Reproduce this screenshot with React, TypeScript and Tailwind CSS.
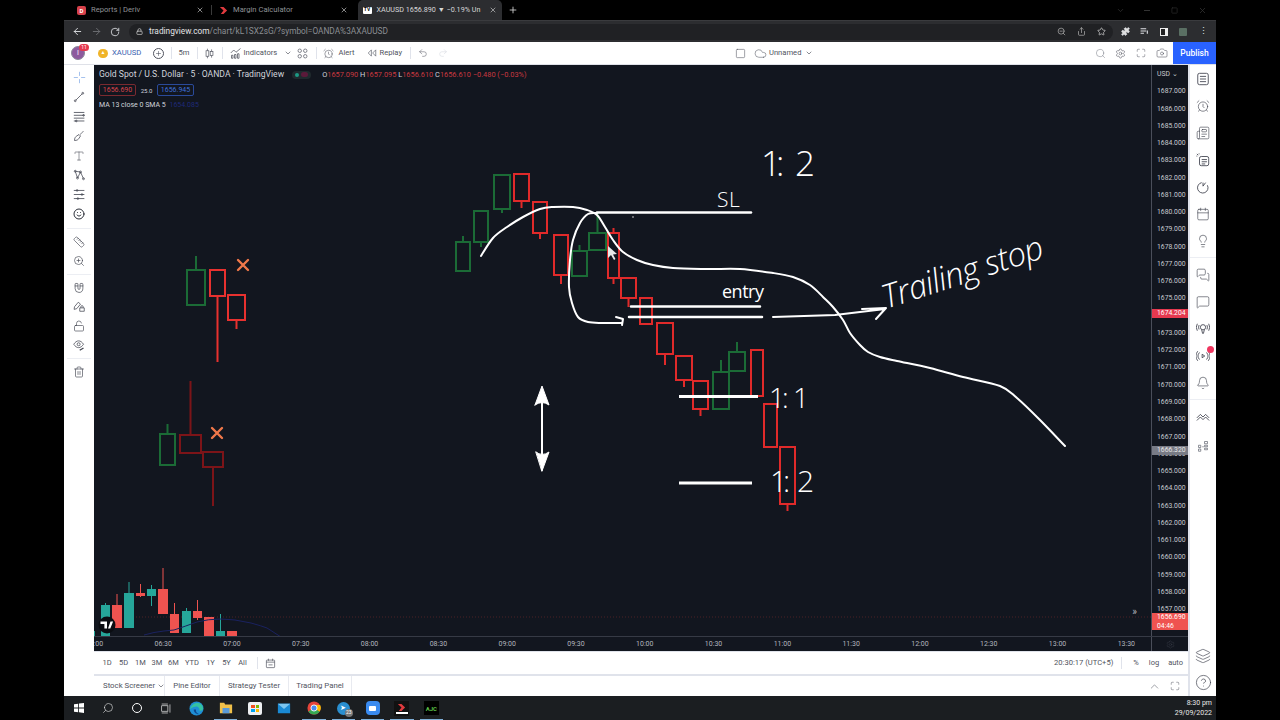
import {
  AlarmClock, ArrowLeft, ArrowRight, Bell, Calendar, Camera, ChevronDown, ChevronUp, CircleHelp, Cloud, Layers, Lightbulb,
  Lock, LockOpen, Magnet, Maximize, MessageSquare, MessagesSquare, Newspaper, Plus, Puzzle, Redo2, RotateCw, Ruler,
  Search, Settings, Share, Smile, Square, Star, Trash2, Type, Undo2, X, ZoomIn, ZoomOut,
} from 'lucide-react';
import type { ReactNode } from 'react';

const GREEN = '#1b6b36';
const RED = '#e02a2a';
const DARKRED = '#7c1418';

type CandleProps = { x0: number; x1: number; y0: number; y1: number; top?: number; bottom?: number; color: string; sw?: number };

// hollow hand-marked candle, coords are page pixels
function Candle({ x0, x1, y0, y1, top, bottom, color, sw = 2 }: CandleProps) {
  const mid = (x0 + x1) / 2;
  return (
    <g stroke={color} strokeWidth={sw} fill="none">
      <rect x={x0} y={y0} width={x1 - x0} height={y1 - y0} />
      {top !== undefined && <line x1={mid} x2={mid} y1={top} y2={y0} />}
      {bottom !== undefined && <line x1={mid} x2={mid} y1={y1} y2={bottom} />}
    </g>
  );
}

const marked: CandleProps[] = [
  { x0: 456, x1: 470, y0: 242, y1: 271, top: 236, color: GREEN },
  { x0: 474, x1: 488, y0: 211, y1: 242, bottom: 247, color: GREEN },
  { x0: 494, x1: 510, y0: 175, y1: 209, bottom: 213, color: GREEN },
  { x0: 514, x1: 529, y0: 174, y1: 201, bottom: 208, color: RED },
  { x0: 533, x1: 547, y0: 202, y1: 233, bottom: 239, color: RED },
  { x0: 554, x1: 568, y0: 235, y1: 275, bottom: 284, color: RED },
  { x0: 572, x1: 587, y0: 251, y1: 276, top: 245, color: GREEN },
  { x0: 589, x1: 606, y0: 233, y1: 250, top: 213, color: GREEN, sw: 2 },
  { x0: 608, x1: 619, y0: 233, y1: 278, top: 228, bottom: 284, color: RED },
  { x0: 621, x1: 636, y0: 278, y1: 298, bottom: 307, color: RED },
  { x0: 640, x1: 652, y0: 298, y1: 324, color: RED },
  { x0: 657, x1: 673, y0: 323, y1: 354, bottom: 365, color: RED },
  { x0: 676, x1: 692, y0: 356, y1: 380, bottom: 387, color: RED },
  { x0: 693, x1: 708, y0: 381, y1: 409, bottom: 416, color: RED },
  { x0: 713, x1: 729, y0: 372, y1: 409, top: 360, color: GREEN },
  { x0: 729, x1: 745, y0: 352, y1: 371, top: 342, color: GREEN },
  { x0: 751, x1: 763, y0: 350, y1: 396, color: RED },
  { x0: 764, x1: 777, y0: 404, y1: 447, color: RED },
  { x0: 780, x1: 795, y0: 447, y1: 504, bottom: 511, color: RED },
  { x0: 187, x1: 205, y0: 270, y1: 305, top: 256, color: GREEN },
  { x0: 210, x1: 225, y0: 270, y1: 296, bottom: 362, color: '#e8312f' },
  { x0: 228, x1: 245, y0: 295, y1: 320, bottom: 329, color: '#e8312f' },
  { x0: 160, x1: 175, y0: 434, y1: 465, top: 424, color: GREEN },
  { x0: 180, x1: 201, y0: 435, y1: 453, top: 381, color: DARKRED },
  { x0: 203, x1: 223, y0: 452, y1: 467, bottom: 506, color: DARKRED },
];

// x0, x1, body top, body bottom, wick top, wick bottom
const live: [number, number, number, number, number, number, string][] = [
  [92, 95, 631, 637, 631, 637, '#26a69a'],
  [101, 110, 605, 637, 603, 637, '#26a69a'],
  [112, 122, 605, 628, 594, 628, '#ef5350'],
  [124, 134, 593, 628, 582, 628, '#26a69a'],
  [136, 145, 593, 596, 584, 597, '#ef5350'],
  [147, 156, 589, 596, 585, 606, '#26a69a'],
  [158, 168, 589, 614, 568, 614, '#ef5350'],
  [170, 179, 614, 633, 603, 633, '#ef5350'],
  [182, 191, 611, 633, 608, 633, '#26a69a'],
  [193, 202, 611, 618, 600, 620, '#ef5350'],
  [204, 214, 617, 637, 617, 637, '#ef5350'],
  [216, 225, 631, 637, 614, 637, '#26a69a'],
  [227, 237, 631, 637, 631, 637, '#ef5350'],
];

type Pt = [number, number];

// catmull-rom through the points, so the pen strokes stay round
function smooth(pts: Pt[]) {
  let d = `M${pts[0][0]} ${pts[0][1]}`;
  for (let i = 0; i < pts.length - 1; i++) {
    const p0 = pts[Math.max(i - 1, 0)];
    const p1 = pts[i];
    const p2 = pts[i + 1];
    const p3 = pts[Math.min(i + 2, pts.length - 1)];
    const c1x = p1[0] + (p2[0] - p0[0]) / 6;
    const c1y = p1[1] + (p2[1] - p0[1]) / 6;
    const c2x = p2[0] - (p3[0] - p1[0]) / 6;
    const c2y = p2[1] - (p3[1] - p1[1]) / 6;
    d += ` C${c1x.toFixed(1)} ${c1y.toFixed(1)} ${c2x.toFixed(1)} ${c2y.toFixed(1)} ${p2[0]} ${p2[1]}`;
  }
  return d;
}

const trailCurve: Pt[] = [
  [481, 256], [493, 238], [507, 227], [523, 217], [540, 209], [553, 207], [573, 207], [587, 210], [597, 215], [605, 227], [613, 240],
  [623, 252], [637, 260], [653, 265], [673, 268], [707, 269], [740, 269], [773, 273], [793, 277], [810, 285], [823, 297], [833, 307],
  [843, 320], [850, 333], [860, 345], [868, 352], [880, 357], [897, 361], [930, 368], [963, 377], [1000, 386], [1017, 398], [1040, 420], [1065, 446],
];

const hookCurve: Pt[] = [
  [597, 213], [588, 214], [580, 223], [573, 240], [570, 260], [569, 287], [572, 303], [578, 317], [588, 322], [603, 323], [622, 323],
];

function ChartDrawing() {
  return (
    <svg viewBox="94 65 1057 571" className="block h-[571px] w-[1057px]">
      <line x1="136" x2="1151" y1="617" y2="617" stroke="#4a2026" strokeWidth="1" strokeDasharray="1 2" />
      {live.map(([a, b, t, u, wt, wb, col]) => (
        <g key={a}>
          <line x1={(a + b) / 2} x2={(a + b) / 2} y1={wt} y2={wb} stroke={col} strokeWidth="1" />
          <rect x={a} y={t} width={b - a} height={u - t} fill={col} />
        </g>
      ))}
      <path d="M144 635 Q154 632 164 631 L174 630 Q186 626 197 622 Q208 619 221 619 Q234 619 251 623 Q262 626 267 628 L281 637" fill="none" stroke="#1a2260" strokeWidth="1" />
      <circle cx="107" cy="625" r="8.5" fill="#0b0d12" />
      <path d="M102 621.5h6.500v7h-2.600v-4.500h-3.900z M109.500 628.500l2.500-7h2.600l-2.800 7z" fill="#fff" transform="translate(-1.500 0)" />

      {marked.map((c, i) => (
        <Candle key={i} {...c} />
      ))}

      <g stroke="#f0784a" strokeWidth="2.400" strokeLinecap="round">
        <path d="M238 260l10 10M248 260l-10 10" />
        <path d="M212 428l10 10M222 428l-10 10" />
      </g>

      <g fill="none" stroke="#fff" strokeLinecap="round" strokeLinejoin="round">
        <path strokeWidth="2" d={smooth(trailCurve)} />
        <path strokeWidth="2" d={smooth(hookCurve)} />
        <path strokeWidth="2" d="M616 317 L623 319 L622 325" />
        <path strokeWidth="2.500" d="M597 212.500H751" />
        <path strokeWidth="2.500" d="M631 306.500H760M629 317H762" />
        <path strokeWidth="2" d="M773 317 L835 315 L885 309 M862 309 L886 308 L876 319" />
        <path strokeWidth="3" d="M679 396.500H758M679 483H752" strokeLinecap="butt" />
        <path strokeWidth="2" d="M542 390V470" />
        <path d="M535 405L542 386L549 405Q542 400 535 405Z M536 452Q542 457 549 452L542 471Z" fill="#fff" strokeWidth="1" />
      </g>
      <circle cx="633" cy="217" r="0.800" fill="#ddd" />
      <path d="M608 246 V258 L611 255 L614 260 L615.500 259 L613 254.500 L617 254 Z" fill="#e8e8e8" />

      <g fill="#fff" fontFamily="'Open Sans', sans-serif" fontWeight="300">
        <text x="761 776 795" y="176" fontSize="35">1:2</text>
        <text x="717 729" y="207" fontSize="21">SL</text>
        <text x="722" y="298" fontSize="18" fontWeight="400" textLength="42">entry</text>
        <text x="769 782 793" y="408" fontSize="28">1:1</text>
        <text x="770 783 797" y="492" fontSize="30">1:2</text>
        <text x="0" y="0" fontSize="33" fontStyle="italic" textLength="168" transform="translate(886 309) rotate(-18)">Trailing stop</text>
      </g>
    </svg>
  );
}

function Ico({ children, className = 'h-3 w-3' }: { children: ReactNode; className?: string }) {
  return (
    <svg viewBox="0 0 16 16" fill="none" stroke="currentColor" strokeWidth="1" className={className}>
      {children}
    </svg>
  );
}

const icT = 'h-[12px] w-[12px] text-[#434651]';
const sw = 1.3;

function ToolCell({ children }: { children: ReactNode }) {
  return <div className="flex h-[19.5px] items-center justify-center">{children}</div>;
}

function ToolSep({ h }: { h: string }) {
  return (
    <div className={`flex items-center px-[3px] ${h}`}>
      <div className="h-px w-full bg-[#eceef3]" />
    </div>
  );
}

function LeftToolbar() {
  return (
    <div className="flex w-[30px] flex-col bg-white pt-[3px]">
      <ToolCell>
        <Ico className="h-[13px] w-[13px] text-[#90b4ea]">
          <path d="M8 1v5M8 10v5M1 8h5M10 8h5" />
        </Ico>
      </ToolCell>
      <ToolCell>
        <Ico className={icT}>
          <path d="M3.500 12.500l9-9" />
          <circle cx="3" cy="13" r="1.200" />
          <circle cx="13" cy="3" r="1.200" />
        </Ico>
      </ToolCell>
      <ToolCell>
        <Ico className="h-[13px] w-[13px] text-[#434651]">
          <path d="M1 3h13M1 6.500h13M1 10h13M1 13.500h13" />
          <circle cx="13" cy="6.500" r="1" />
          <circle cx="4" cy="13.500" r="1" />
        </Ico>
      </ToolCell>
      <ToolCell>
        <Ico className={icT}>
          <path d="M2 14c0-3 1-5 3-6l3-2 2 2-2 3c-1 2-3 3-6 3zM10 6c1-2 2-3 4-4" />
        </Ico>
      </ToolCell>
      <ToolCell>
        <Type className={icT} strokeWidth={1.100} />
      </ToolCell>
      <ToolCell>
        <Ico className={icT}>
          <path d="M3 3l3 9 4-8 4 9M3 3l7 1" />
          <circle cx="3" cy="3" r="1.300" />
          <circle cx="6" cy="12" r="1.300" />
          <circle cx="10" cy="4" r="1.300" />
          <circle cx="14" cy="13" r="1.300" />
        </Ico>
      </ToolCell>
      <ToolCell>
        <Ico className="h-[13px] w-[13px] text-[#434651]">
          <path d="M1 3h13M1 8h13M1 13h13" />
          <circle cx="5" cy="3" r="1" />
          <circle cx="11" cy="8" r="1" />
          <circle cx="6" cy="13" r="1" />
        </Ico>
      </ToolCell>
      <ToolCell>
        <Smile className="h-[12px] w-[12px] text-[#131722]" strokeWidth={1.800} />
      </ToolCell>
      <ToolSep h="h-[8px]" />
      <ToolCell>
        <Ruler className={icT} strokeWidth={sw} />
      </ToolCell>
      <ToolCell>
        <ZoomIn className={icT} strokeWidth={sw} />
      </ToolCell>
      <ToolSep h="h-[6px]" />
      <ToolCell>
        <Magnet className={icT + ' rotate-[135deg]'} strokeWidth={sw} />
      </ToolCell>
      <ToolCell>
        <Ico className={icT}>
          <path d="M2 9l5-6 3 2.500-5 6-3.500 1zM9 10.500h6v4.500H9zM10.500 10.500V9a1.500 1.500 0 0 1 3 0v1.500" />
        </Ico>
      </ToolCell>
      <ToolCell>
        <LockOpen className={icT} strokeWidth={sw} />
      </ToolCell>
      <ToolCell>
        <Ico className={icT}>
          <path d="M1 7c2-3 4-4.500 6.500-4.500S12 4 14 7c-2 3-4 4.500-6.500 4.500S3 10 1 7z" />
          <circle cx="7.500" cy="7" r="2" />
          <path d="M9 15l5-3" strokeWidth="1.800" />
        </Ico>
      </ToolCell>
      <ToolSep h="h-[7px]" />
      <ToolCell>
        <Trash2 className={icT} strokeWidth={sw} />
      </ToolCell>
    </div>
  );
}

function SideCell({ children }: { children: ReactNode }) {
  return <div className="relative flex h-[27px] items-center justify-center">{children}</div>;
}

const icS = 'h-[14px] w-[14px] text-[#434651]';

function RightSidebar() {
  return (
    <div className="ml-[2px] flex w-[26px] flex-col bg-white">
      <SideCell>
        <Ico className={icS}>
          <rect x="2" y="1.500" width="12" height="13" rx="2" />
          <path d="M4.500 5h7M4.500 8h7M4.500 11h7" />
        </Ico>
      </SideCell>
      <SideCell>
        <AlarmClock className={icS} strokeWidth={1.100} />
      </SideCell>
      <SideCell>
        <Newspaper className={icS} strokeWidth={1.100} />
      </SideCell>
      <SideCell>
        <Ico className={icS}>
          <rect x="4" y="4" width="10.500" height="10.500" rx="2" />
          <path d="M6.500 7.500h6M6.500 10h6M6.500 12.500h4M1 1l1.500 1.500M3.500.5v1M.5 3.500h1" />
        </Ico>
      </SideCell>
      <SideCell>
        <Ico className={icS}>
          <path d="M6.500 3a6 6 0 1 0 6.500 3M8 3v4l3-4" />
        </Ico>
      </SideCell>
      <SideCell>
        <Calendar className={icS} strokeWidth={1.100} />
      </SideCell>
      <SideCell>
        <Lightbulb className={icS} strokeWidth={1.100} />
      </SideCell>
      <div className="flex h-[7px] items-center">
        <div className="h-px w-full bg-[#eceef3]" />
      </div>
      <SideCell>
        <MessagesSquare className={icS} strokeWidth={1.100} />
      </SideCell>
      <SideCell>
        <MessageSquare className={icS} strokeWidth={1.100} />
      </SideCell>
      <SideCell>
        <Ico className={icS}>
          <circle cx="8" cy="6" r="3" />
          <path d="M6.500 9l1 4h1l1-4M3.500 3.500a6 6 0 0 0 0 5M1.500 2a8 8 0 0 0 0 8M12.500 3.500a6 6 0 0 1 0 5M14.500 2a8 8 0 0 1 0 8" />
        </Ico>
      </SideCell>
      <SideCell>
        <Ico className={icS}>
          <path d="M7 6l3 2-3 2zM4 4a6 6 0 0 0 0 8M2 2.500a9 9 0 0 0 0 11M12 4a6 6 0 0 1 0 8M14 2.500a9 9 0 0 1 0 11" />
        </Ico>
        <span className="absolute right-[2px] top-[4px] h-[7px] w-[7px] rounded-full bg-[#f0365f]" />
      </SideCell>
      <SideCell>
        <Bell className={icS} strokeWidth={1.100} />
      </SideCell>
      <div className="flex h-[7px] items-center">
        <div className="h-px w-full bg-[#eceef3]" />
      </div>
      <SideCell>
        <Ico className={icS}>
          <path d="M1 9l4-4 3 3 3-3 4 4M1 12l4-4 3 3 3-3 4 4" />
        </Ico>
      </SideCell>
      <div className="h-[2px]" />
      <SideCell>
        <Ico className="h-[12px] w-[12px] text-[#6a6d78]">
          <path d="M2 7h3v3H2zM2 12h3v3H2zM10 2h4v3h-4zM10 7h4v2h-4zM10 11h4v2h-4zM7 9h2" />
        </Ico>
      </SideCell>
      <div className="flex-1" />
      <SideCell>
        <Layers className="h-[16px] w-[16px] text-[#434651]" strokeWidth={1} />
      </SideCell>
      <SideCell>
        <CircleHelp className="h-[17px] w-[17px] text-[#434651]" strokeWidth={1} />
      </SideCell>
    </div>
  );
}

const prices = Array.from({ length: 31 }, (_, i) => (1687 - i).toFixed(3));

function PriceAxis() {
  return (
    <div className="relative h-[571px] w-[37px] overflow-hidden border-l border-[#4a4e5a] text-[6.800px] leading-none text-[#c8cad0]">
      <div className="flex h-[18px] items-center pl-[5px]">USD ⌄</div>
      {prices.map(p => (
        <div key={p} className="flex h-[17.27px] items-center pl-[5px]">
          {p}
        </div>
      ))}
      <div className="absolute left-0 right-0 top-[244px] flex h-[9px] items-center bg-[#e5394f] pl-[5px] text-white">1674.204</div>
      <div className="absolute left-0 right-0 top-[381px] flex h-[9px] items-center bg-[#787b86] pl-[5px] text-[#e8e8e8]">1666.320</div>
      <div className="absolute left-0 right-0 top-[548px] flex h-[17px] flex-col justify-center gap-[2px] bg-[#ef5350] pl-[5px] text-white">
        <span>1656.690</span>
        <span>04:46</span>
      </div>
    </div>
  );
}

const times = ['06:00', '06:30', '07:00', '07:30', '08:00', '08:30', '09:00', '09:30', '10:00', '10:30', '11:00', '11:30', '12:00', '12:30', '13:00', '13:30'];

function Legend() {
  return (
    <div className="absolute left-[5px] top-[4px] text-[#d1d4dc]">
      <div className="flex h-[11px] items-center whitespace-nowrap text-[8.600px]">
        <span>Gold Spot / U.S. Dollar · 5 · OANDA · TradingView</span>
        <span className="ml-[8px] flex h-[8px] w-[19px] items-center gap-[2px] rounded-full bg-[#1f2a2e] pl-[3px]">
          <span className="h-[4px] w-[4px] rounded-full bg-[#1d9a85]" />
          <span className="h-[5px] w-[7px] rounded-full bg-[#5a1a3a]" />
        </span>
        <span className="ml-[11px] text-[7.400px] text-[#d1d4dc]">
          O<span className="text-[#c9383f]">1657.090 </span>H<span className="text-[#c9383f]">1657.095 </span>L<span className="text-[#c9383f]">1656.610 </span>C<span className="text-[#c9383f]">1656.610 −0.480 (−0.03%)</span>
        </span>
      </div>
      <div className="mt-[4px] flex items-center text-[7px]">
        <span className="flex h-[12px] w-[37px] items-center justify-center rounded-[2px] border border-[#7a2a30] text-[#d9454c]">1656.690</span>
        <span className="w-[21px] text-center text-[6px]">25.0</span>
        <span className="flex h-[12px] w-[37px] items-center justify-center rounded-[2px] border border-[#2a4a9a] text-[#3f70d8]">1656.945</span>
      </div>
      <div className="mt-[4px] whitespace-nowrap text-[7px]">
        MA 13 close 0 SMA 5 <span className="ml-[2px] text-[#1f2a78]">1654.085</span>
      </div>
    </div>
  );
}

function Chart() {
  return (
    <div className="h-[586px] bg-[#12161f]">
      <div className="flex h-[571px]">
        <div className="relative w-[1057px] overflow-hidden">
          <ChartDrawing />
          <Legend />
          <span className="absolute bottom-[19px] right-[14px] text-[10px] leading-none text-[#b2b5be]">»</span>
        </div>
        <PriceAxis />
      </div>
      <div className="flex h-[15px] border-t border-[#363a45]">
        <div className="w-[1057px] overflow-hidden">
          <div className="-ml-[34px] flex text-[7px] leading-[14px] text-[#b2b5be]">
            {times.map(t => (
              <span key={t} className="w-[68.800px] shrink-0 text-center">
                {t}
              </span>
            ))}
          </div>
        </div>
        <div className="flex w-[37px] items-center justify-center border-l border-[#4a4e5a]">
          <Settings className="h-[9px] w-[9px] text-[#3a3e4a]" strokeWidth={1.200} />
        </div>
      </div>
    </div>
  );
}

function RangeBar() {
  const ranges: [string, string][] = [
    ['1D', 'w-[16px]'], ['5D', 'w-[17px]'], ['1M', 'w-[17px]'], ['3M', 'w-[16px]'], ['6M', 'w-[17px]'], ['YTD', 'w-[20px]'], ['1Y', 'w-[17px]'], ['5Y', 'w-[15px]'], ['All', 'w-[17px]'],
  ];
  return (
    <div className="mt-px flex h-[22px] items-center bg-white pl-[5px] text-[7.500px] text-[#50535e]">
      {ranges.map(([r, w]) => (
        <span key={r} className={`${w} text-center`}>
          {r}
        </span>
      ))}
      <span className="ml-[6px] h-[12px] w-px bg-[#e0e3eb]" />
      <Ico className="ml-[7px] h-[11px] w-[11px] text-[#50535e]">
        <rect x="2" y="3" width="12" height="11" rx="1" />
        <path d="M2 6h12M5 1v3M11 1v3M5 10h6" />
      </Ico>
      <div className="flex-1" />
      <span className="text-[7.600px]">20:30:17 (UTC+5)</span>
      <span className="ml-[8px] h-[12px] w-px bg-[#e0e3eb]" />
      <span className="ml-[11px]">%</span>
      <span className="ml-[10px]">log</span>
      <span className="ml-[9px] mr-[5px]">auto</span>
    </div>
  );
}

function BottomPanel() {
  const tabs: [string, string][] = [['Pine Editor', 'w-[55px]'], ['Strategy Tester', 'w-[69px]'], ['Trading Panel', 'w-[63px]']];
  return (
    <div className="mt-[2px] flex h-[20px] items-center whitespace-nowrap bg-white text-[7.800px] text-[#50535e]">
      <div className="flex h-full w-[71px] shrink-0 items-center border-r border-[#e8eaf0] pl-[9px]">
        <span>Stock Screener</span>
        <ChevronDown className="ml-[2px] h-[8px] w-[8px] shrink-0" />
      </div>
      {tabs.map(([t, w]) => (
        <div key={t} className={`flex h-full ${w} items-center justify-center border-r border-[#e8eaf0]`}>
          {t}
        </div>
      ))}
      <div className="flex-1" />
      <ChevronUp className="h-[13px] w-[13px]" strokeWidth={1} />
      <Maximize className="ml-[9px] mr-[8px] h-[10px] w-[10px]" strokeWidth={1.200} />
    </div>
  );
}

function Tab({ label, w, active, icon }: { label: string; w: string; active?: boolean; icon: ReactNode }) {
  return (
    <div className={`flex h-[20px] ${w} items-center rounded-t-[5px] pl-[5px] pr-[5px] ${active ? 'ml-[4.500px] bg-[#2c2d30] text-[#d8d8d8]' : 'text-[#8f9296]'}`}>
      {icon}
      <span className={`ml-[5px] flex-1 whitespace-nowrap ${active ? 'text-[7.200px]' : 'text-[7.600px]'}`}>{label}</span>
      <X className="ml-[3px] h-[8px] w-[8px] shrink-0 text-[#c8c8c8]" strokeWidth={2} />
    </div>
  );
}

function BrowserChrome() {
  return (
    <>
      <div className="flex h-[20px] items-center bg-black pl-[8px]">
        <Tab
          label="Reports | Deriv"
          w="w-[137px]"
          icon={<span className="flex h-[9px] w-[9px] items-center justify-center rounded-[2px] bg-[#d8414a] text-[6px] font-bold text-white">D</span>}
        />
        <span className="mx-[2px] h-[10px] w-px bg-[#3a3a3a]" />
        <Tab
          label="Margin Calculator"
          w="w-[139px]"
          icon={
            <svg viewBox="0 0 10 10" className="h-[9px] w-[9px]">
              <path d="M1 1h4l4 4-4 4H2l3-4z" fill="#e03a3e" />
            </svg>
          }
        />
        <Tab
          active
          label="XAUUSD 1656.890 ▼ −0.19% Un"
          w="w-[144px]"
          icon={<span className="flex h-[7px] w-[9px] items-center justify-center rounded-[1px] bg-white text-[5px] font-bold text-black">TV</span>}
        />
        <Plus className="ml-[6px] h-[10px] w-[10px] text-[#d8d8d8]" strokeWidth={2} />
        <div className="flex-1" />
        <ChevronDown className="h-[9px] w-[9px] text-[#333]" />
        <span className="ml-[19px] h-px w-[6px] bg-[#333]" />
        <Square className="ml-[21px] h-[7px] w-[7px] text-[#333]" />
        <X className="ml-[20px] mr-[9px] h-[9px] w-[9px] text-[#333]" />
      </div>
      <div className="flex h-[22px] items-center border-t border-[#3a3b3e] bg-[#2c2d30] pl-[8px] text-[#dfe1e5]">
        <ArrowLeft className="h-[11px] w-[11px] shrink-0" strokeWidth={2} />
        <ArrowRight className="ml-[8px] h-[11px] w-[11px] shrink-0 text-[#6e7074]" strokeWidth={2} />
        <RotateCw className="ml-[8px] h-[10px] w-[10px] shrink-0" strokeWidth={2} />
        <div className="ml-[9px] flex h-[16px] w-[984px] shrink-0 items-center rounded-full bg-[#202124] pl-[6.500px]">
          <Lock className="h-[7px] w-[7px] text-[#c8c8c8]" strokeWidth={2.500} />
          <span className="ml-[6.500px] whitespace-nowrap text-[8.300px] text-[#8b8e93]">
            <span className="text-[#e3e4e6]">tradingview.com</span>/chart/kL1SX2sG/?symbol=OANDA%3AXAUUSD
          </span>
          <div className="flex-1" />
          <ZoomOut className="h-[9px] w-[9px] text-[#a8a8a8]" />
          <Share className="ml-[11px] h-[9px] w-[9px] text-[#a8a8a8]" />
          <Star className="ml-[11px] mr-[7px] h-[9px] w-[9px] text-[#c8c8c8]" />
        </div>
        <Puzzle className="ml-[8px] h-[9px] w-[9px] fill-[#e0e0e0]" />
        <Ico className="ml-[10px] h-[9px] w-[9px]">
          <path d="M1 3h10M1 7h10M1 11h6M13 6v6" strokeWidth="2" />
        </Ico>
        <span className="ml-[11px] h-[8px] w-[8px] border-[1.500px] border-r-[3px] border-[#eee] bg-[#222]" />
        <span className="ml-[11px] h-[8px] w-[8px] rounded-[1px] bg-[#5a6f63]" />
        <span className="ml-[12px] text-[9px] leading-none">⋮</span>
      </div>
    </>
  );
}

function TvToolbar() {
  return (
    <div className="flex h-[22px] items-center whitespace-nowrap bg-white text-[7.600px] text-[#50535e]">
      <div className="relative ml-[7px] flex h-[14px] w-[14px] items-center justify-center rounded-full border border-[#8a8a9a] bg-[#8d5a9e] text-[7px] text-white">
        I
        <span className="absolute -right-[5px] -top-[3px] flex h-[7px] w-[10px] items-center justify-center rounded-full bg-[#e5394f] text-[5px]">11</span>
      </div>
      <span className="ml-[13px] flex h-[9px] w-[10px] items-center justify-center rounded-full bg-[#f0b429] text-[5px] text-white">▲</span>
      <span className="ml-[4px] w-[28px] text-[7.700px] text-[#3a5fb0]">XAUUSD</span>
      <Plus className="ml-[12.500px] h-[11px] w-[11px] rounded-full border border-[#50535e] p-px" />
      <span className="ml-[7px] h-[12px] w-px bg-[#e0e3eb]" />
      <span className="ml-[7px] w-[10px]">5m</span>
      <span className="ml-[8px] h-[12px] w-px bg-[#e0e3eb]" />
      <Ico className="ml-[6.500px] h-[11px] w-[11px]">
        <path d="M5 1v14M11 2v12" />
        <rect x="3" y="4" width="4" height="8" fill="#fff" />
        <rect x="9" y="5" width="4" height="6" fill="#fff" />
      </Ico>
      <span className="ml-[6.500px] h-[12px] w-px bg-[#e0e3eb]" />
      <Ico className="ml-[7px] h-[12px] w-[12px]">
        <path d="M1 8l4-4 3 3 6-5M2 15v-4h2v4zM6 15v-5h2v5zM10 15V9h2v6z" />
      </Ico>
      <span className="ml-[2px] w-[33.500px]">Indicators</span>
      <ChevronDown className="ml-[6.500px] h-[8px] w-[8px]" />
      <Ico className="ml-[5.500px] h-[11px] w-[11px]">
        <circle cx="4" cy="4" r="2.500" />
        <circle cx="12" cy="4" r="2.500" />
        <circle cx="4" cy="12" r="2.500" />
        <circle cx="12" cy="12" r="2.500" />
      </Ico>
      <span className="ml-[7.500px] h-[12px] w-px bg-[#e0e3eb]" />
      <AlarmClock className="ml-[6.500px] h-[11px] w-[11px]" strokeWidth={1.200} />
      <span className="ml-[4.500px] w-[17px]">Alert</span>
      <Ico className="ml-[11px] h-[10px] w-[10px]">
        <path d="M7 3L2 8l5 5zM14 3L9 8l5 5z" />
      </Ico>
      <span className="ml-[3px] w-[22px]">Replay</span>
      <span className="ml-[8px] h-[12px] w-px bg-[#e0e3eb]" />
      <Undo2 className="ml-[7px] h-[10px] w-[10px]" strokeWidth={1.200} />
      <Redo2 className="ml-[10px] h-[10px] w-[10px] text-[#d1d4dc]" strokeWidth={1.200} />
      <Square className="ml-[287px] h-[11px] w-[11px]" strokeWidth={1.200} />
      <Cloud className="ml-[8px] h-[13px] w-[13px]" strokeWidth={1} />
      <span className="ml-[2.500px] w-[32px]">Unnamed</span>
      <ChevronDown className="ml-[4px] h-[8px] w-[8px]" />
      <div className="flex-1" />
      <Search className="h-[11px] w-[11px] text-[#6a6d78]" strokeWidth={1} />
      <Settings className="ml-[9px] h-[11px] w-[11px]" strokeWidth={1.200} />
      <Maximize className="ml-[10px] h-[10px] w-[10px]" strokeWidth={1.200} />
      <Camera className="ml-[10px] h-[12px] w-[12px]" strokeWidth={1.100} />
      <span className="ml-[5px] flex h-[22px] w-[43px] items-center justify-center bg-[#2962ff] text-[8.500px] font-medium text-white">Publish</span>
    </div>
  );
}

function TaskIcon({ children, running }: { children: ReactNode; running?: boolean }) {
  return (
    <div className="relative flex h-full w-[29.400px] items-center justify-center">
      {children}
      {running && <span className="absolute bottom-0 left-[3px] right-[3px] h-[1px] bg-[#7fb0d8]" />}
    </div>
  );
}

function Taskbar() {
  return (
    <div className="flex h-[24px] items-center bg-[#1b1e21] text-white">
      <TaskIcon>
        <svg viewBox="0 0 12 12" className="h-[10px] w-[10px]" fill="#fff">
          <path d="M0 1.500l5-.7v4.700H0zM6 .7l6-.7v5.500H6zM0 6.500h5v4.700l-5-.7zM6 6.500h6V12l-6-.8z" />
        </svg>
      </TaskIcon>
      <TaskIcon>
        <Search className="h-[12px] w-[12px] -scale-x-100 text-[#e8e8e8]" strokeWidth={1.200} />
      </TaskIcon>
      <TaskIcon>
        <span className="h-[10px] w-[10px] rounded-full border-[1.500px] border-white" />
      </TaskIcon>
      <TaskIcon>
        <Ico className="h-[11px] w-[11px] text-[#e8e8e8]">
          <rect x="1" y="4" width="9" height="8" />
          <path d="M1 1.500h9M1 14.500h9M13 2v12" />
        </Ico>
      </TaskIcon>
      <TaskIcon>
        <svg viewBox="0 0 16 16" className="h-[15px] w-[15px]">
          <circle cx="8" cy="8" r="7.500" fill="#1f8fd6" />
          <path d="M1 9c1-5 5-7 8-7 3 0 6 2 6 6 0 2-2 2.500-4 2.500 1-2-1-5-4-4.500-3 .5-5 1-6 3z" fill="#35c1a0" />
          <path d="M5 9c0 3 3 5.500 6 5-3-1-4-3-3.500-5z" fill="#0d4a90" />
        </svg>
      </TaskIcon>
      <TaskIcon running>
        <svg viewBox="0 0 16 16" className="h-[14px] w-[14px]">
          <path d="M1 2h5l1 2h8v10H1z" fill="#f0c04a" />
          <rect x="4" y="8" width="8" height="6" fill="#5a9ad8" />
        </svg>
      </TaskIcon>
      <TaskIcon>
        <span className="grid h-[13px] w-[14px] grid-cols-2 place-content-center gap-px rounded-[2px] bg-[#eef0f2] p-[3px]">
          <span className="h-[3px] bg-[#f25022]" />
          <span className="h-[3px] bg-[#7fba00]" />
          <span className="h-[3px] bg-[#00a4ef]" />
          <span className="h-[3px] bg-[#ffb900]" />
        </span>
      </TaskIcon>
      <TaskIcon>
        <svg viewBox="0 0 16 16" className="h-[14px] w-[14px]">
          <rect x="1" y="3" width="14" height="11" fill="#1a8ad4" />
          <path d="M1 3l7 6 7-6z" fill="#7cc6f0" />
        </svg>
      </TaskIcon>
      <TaskIcon running>
        <svg viewBox="0 0 16 16" className="h-[14px] w-[14px]">
          <circle cx="8" cy="8" r="7.500" fill="#e5443a" />
          <path d="M8 8L1.500 12A7.500 7.500 0 0 0 8 15.500 7.500 7.500 0 0 0 14.500 12z" fill="#35a853" />
          <path d="M8 8l6.500 4A7.500 7.500 0 0 0 15 4.500H8z" fill="#fbbc05" />
          <circle cx="8" cy="8" r="3.500" fill="#4a8cf0" stroke="#fff" />
        </svg>
      </TaskIcon>
      <TaskIcon running>
        <span className="relative flex h-[13px] w-[13px] items-center justify-center rounded-full bg-[#2a8fd0]">
          <span className="text-[7px] leading-none">➤</span>
          <span className="absolute -bottom-[2px] -right-[3px] flex h-[8px] w-[8px] items-center justify-center rounded-full bg-[#777] text-[5px]">23</span>
        </span>
      </TaskIcon>
      <TaskIcon running>
        <span className="flex h-[14px] w-[14px] items-center justify-center rounded-[4px] bg-[#3a8bf0]">
          <span className="h-[5px] w-[7px] rounded-[1px] bg-white" />
        </span>
      </TaskIcon>
      <TaskIcon running>
        <span className="flex h-[15px] w-[15px] flex-col items-center justify-center bg-[#111]">
          <svg viewBox="0 0 10 10" className="h-[9px] w-[9px]">
            <path d="M1 1h4l4 4-4 4H2l3-4z" fill="#e03a3e" />
          </svg>
          <span className="h-[2px] w-[12px] bg-white" />
        </span>
      </TaskIcon>
      <TaskIcon running>
        <span className="flex h-[14px] w-[15px] items-center justify-center bg-black text-[6px] font-bold text-[#5fc24a]">AJC</span>
      </TaskIcon>
      <div className="flex-1" />
      <div className="mr-[4px] text-right text-[7px] leading-[10px] text-[#e8e8e8]">
        <div>8:30 pm</div>
        <div>29/09/2022</div>
      </div>
    </div>
  );
}

export default function App() {
  return (
    <div className="flex h-[720px] w-[1280px] justify-center overflow-hidden bg-black font-['Roboto',sans-serif]">
      <div className="flex w-[1152px] flex-col">
        <BrowserChrome />
        <TvToolbar />
        <div className="h-px bg-[#dfe1e8]" />
        <div className="flex h-[631px] bg-[#e0e3eb]">
          <LeftToolbar />
          <div className="w-[1094px]">
            <Chart />
            <RangeBar />
            <BottomPanel />
          </div>
          <RightSidebar />
        </div>
        <Taskbar />
      </div>
    </div>
  );
}
